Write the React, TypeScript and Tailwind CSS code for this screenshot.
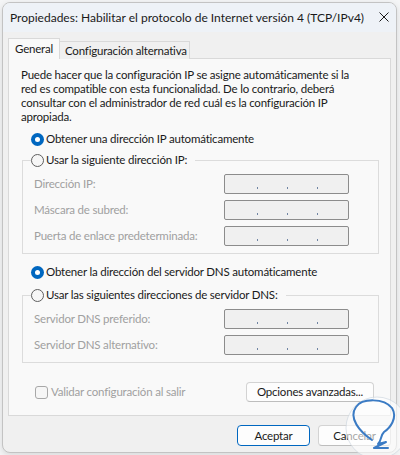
import React from 'react';

function Radio({ checked }: { checked?: boolean }) {
  if (checked) {
    return (
      <span className="flex h-[13px] w-[13px] shrink-0 items-center justify-center rounded-full bg-[#0067c0]">
        <span className="h-[5px] w-[5px] rounded-full bg-white" />
      </span>
    );
  }
  return <span className="h-[13px] w-[13px] shrink-0 rounded-full border border-[#5f5f5f] bg-[#f6f6f6]" />;
}

function IpBox() {
  return (
    <div className="flex h-[20px] w-[125px] items-end rounded-[2px] border border-[#8c8c8c] bg-[#f0f0f0] pb-[4px] pl-[32px]">
      <span className="h-[2px] w-[1px] bg-[#6f84a3]" />
      <span className="ml-[29px] h-[2px] w-[1px] bg-[#6f84a3]" />
      <span className="ml-[29px] h-[2px] w-[1px] bg-[#6f84a3]" />
    </div>
  );
}

function FieldRow({ label }: { label: string }) {
  return (
    <div className="flex h-[20px] items-center">
      <span className="w-[190px] text-[#a0a0a0]">{label}</span>
      <IpBox />
    </div>
  );
}

function Group({ title, labels }: { title: string; labels: string[] }) {
  return (
    <fieldset className="border border-[#dcdcdc] px-0 pb-[7px] pt-[6px]">
      <legend className="ml-[8px] flex h-[16px] items-center gap-[2px] pr-[8px]">
        <Radio />
        <span>{title}</span>
      </legend>
      <div className="flex flex-col gap-[6px] px-[11px]">
        {labels.map((l) => (
          <FieldRow key={l} label={l} />
        ))}
      </div>
    </fieldset>
  );
}

function RadioRow({ label, className }: { label: string; className: string }) {
  return (
    <div className={`flex h-[16px] items-center gap-[2px] pl-[9px] ${className}`}>
      <Radio checked />
      <span>{label}</span>
    </div>
  );
}

export default function App() {
  return (
    <div className="relative h-[455px] w-[400px] overflow-hidden bg-[#f4f5f6] p-[2px] font-['Segoe_UI',Lato,sans-serif] text-[11.5px] leading-[16px] tracking-[-0.2px] text-[#1a1a1a]">
      {/* dialog window */}
      <div className="flex h-[451px] w-[395px] flex-col overflow-hidden rounded-[8px] border border-[#c3c3c3] bg-[#f0f0f0] shadow-[0_2px_6px_rgba(0,0,0,0.12)]">
        <div className="flex h-[29px] shrink-0 items-center justify-between bg-[#eef2f7] pl-[7px] pr-[7px]">
          <span className="whitespace-nowrap text-[12px] tracking-normal">
            Propiedades: Habilitar el protocolo de Internet versión 4 (TCP/IPv4)
          </span>
          <svg width="10" height="10" viewBox="0 0 10 10" className="mb-[1px]">
            <path d="M0.5 0.5 L9.5 9.5 M9.5 0.5 L0.5 9.5" stroke="#1a1a1a" strokeWidth="1" />
          </svg>
        </div>

        <div className="flex flex-1 flex-col px-[5px] pb-[6px] pt-[6px]">
          {/* tabs */}
          <div className="relative z-10 -mb-[1px] flex items-end whitespace-nowrap">
            <div className="h-[21px] w-[52px] border border-b-0 border-[#d9d9d9] bg-[#f9f9f9] pl-[6px] pt-[2px]">General</div>
            <div className="-ml-[1px] h-[18px] w-[131px] border border-b-0 border-[#d9d9d9] bg-[#f0f0f0] pl-[5px] pt-[1px]">
              Configuración alternativa
            </div>
          </div>

          {/* panel */}
          <div className="flex flex-col border border-[#d9d9d9] bg-[#f9f9f9] pb-[13px] pl-[13px] pr-[11px] pt-[9px]">
            <p className="-ml-[1px] whitespace-nowrap leading-[14px]">
              Puede hacer que la configuración IP se asigne automáticamente si la
              <br />
              red es compatible con esta funcionalidad. De lo contrario, deberá
              <br />
              consultar con el administrador de red cuál es la configuración IP
              <br />
              apropiada.
            </p>

            <RadioRow className="mt-[7px]" label="Obtener una dirección IP automáticamente" />
            <div className="mt-[5px]">
              <Group
                title="Usar la siguiente dirección IP:"
                labels={['Dirección IP:', 'Máscara de subred:', 'Puerta de enlace predeterminada:']}
              />
            </div>

            <RadioRow className="mt-[10px]" label="Obtener la dirección del servidor DNS automáticamente" />
            <div className="mt-[7px]">
              <Group
                title="Usar las siguientes direcciones de servidor DNS:"
                labels={['Servidor DNS preferido:', 'Servidor DNS alternativo:']}
              />
            </div>

            <div className="mt-[19px] flex h-[20px] items-center justify-between">
              <div className="ml-[13px] flex items-center gap-[3px]">
                <span className="h-[13px] w-[13px] rounded-[3px] border border-[#a8a8a8] bg-[#f6f6f6]" />
                <span className="text-[#a0a0a0]">Validar configuración al salir</span>
              </div>
              <button className="mr-[5px] h-[20px] w-[128px] rounded-[4px] border border-[#d3d3d3] border-b-[#bdbdbd] bg-[#fdfdfd] text-[#1a1a1a]">
                Opciones avanzadas...
              </button>
            </div>
          </div>

          {/* dialog buttons */}
          <div className="mt-[9px] flex justify-end gap-[8px]">
            <button className="h-[21px] w-[73px] rounded-[4px] border border-[#0067c0] bg-[#fdfdfd]">Aceptar</button>
            <button className="h-[21px] w-[73px] rounded-[4px] border border-[#d3d3d3] border-b-[#bdbdbd] bg-[#fdfdfd]">
              Cancelar
            </button>
          </div>
        </div>
      </div>

      {/* watermark logo */}
      <svg className="absolute left-[340px] top-[395px]" width="70" height="70" viewBox="0 0 70 70">
        <circle cx="37" cy="33" r="31" fill="rgba(255,255,255,0.6)" stroke="rgba(200,210,220,0.6)" strokeWidth="1" />
        <path
          d="M32 45 C20 37, 8 23, 16 12 C22 3, 44 3, 52 13 C58 23, 50 33, 44 37 C40 41, 42 45, 38 49 L46 47 L34 53 L48 53"
          fill="none"
          stroke="#3b7bc4"
          strokeWidth="2"
          strokeLinecap="round"
          strokeLinejoin="round"
        />
      </svg>
    </div>
  );
}
